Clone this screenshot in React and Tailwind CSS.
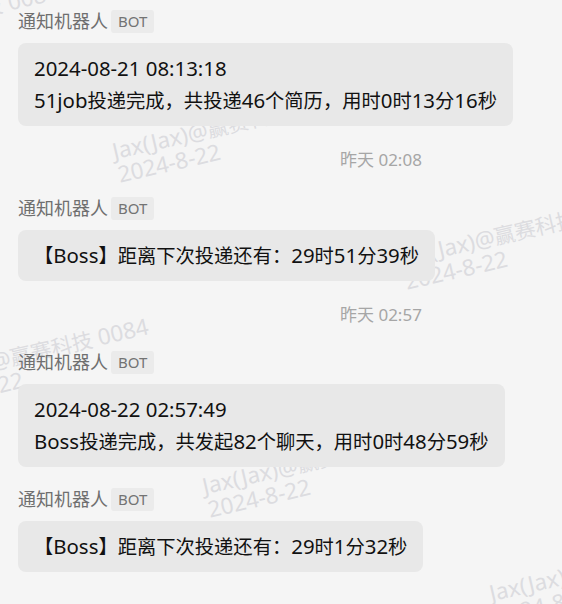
import React from "react";

const FONT = { fontFamily: "'Noto Sans', 'Open Sans', 'Noto Sans CJK SC', sans-serif" };

const marks = [
  [-177, 33],
  [110, 140],
  [397, 247],
  [-87, 368],
  [200, 475],
  [487, 582],
];

function Mixed({ text, latin }) {
  const parts = text.match(/[\x20-\x7e]+|[^\x20-\x7e]+/g) || [];
  return parts.map((p, i) =>
    /^[\x20-\x7e]+$/.test(p) ? (
      <span key={i} className={latin}>{p}</span>
    ) : (
      <span key={i}>{p}</span>
    )
  );
}

function Watermark({ x, y }) {
  return (
    <div
      className="absolute origin-top-left rotate-[-13deg] whitespace-nowrap text-[21px] leading-[24px] text-[#dcdce0]"
      style={{ left: x, top: y }}
    >
      <div><Mixed text="Jax(Jax)@赢赛科技 0084" latin="text-[22.5px] leading-[0]" /></div>
      <div><Mixed text="2024-8-22" latin="text-[22.5px] leading-[0]" /></div>
    </div>
  );
}

function Name() {
  return (
    <div className="flex h-[23px] items-center">
      <span className="text-[18px] leading-[23px] text-[#6f6f6f]">通知机器人</span>
      <span className="ml-[3px] flex h-[23px] items-center rounded-[3px] bg-[#ebebeb] px-[7px] text-[15px] text-[#737373]">
        BOT
      </span>
    </div>
  );
}

function Bubble({ lines }) {
  return (
    <div className="mt-[10px] flex">
      <div className="rounded-lg bg-[#e8e8e8] px-4 pt-[10px] pb-[9px] text-[19.3px] leading-[32px] text-[#111]">
        {lines.map((l, i) => (
          <div key={i} className="h-[32px] whitespace-nowrap">
            <Mixed text={l} latin="text-[20.4px] leading-[0]" />
          </div>
        ))}
      </div>
    </div>
  );
}

function Time({ t }) {
  return (
    <div className="mt-[22px] h-[24px] pl-[322px] text-[17px] leading-[24px] text-[#a6a6a6]">{t}</div>
  );
}

export default function App() {
  return (
    <div className="relative h-[604px] w-[562px] overflow-hidden bg-[#f5f5f5]" style={FONT}>
      <div className="absolute inset-0 z-0">
        {marks.map(([x, y], i) => (
          <Watermark key={i} x={x} y={y} />
        ))}
      </div>
      <div className="relative z-10 flex flex-col px-[18px] pt-[10px]">
        <Name />
        <Bubble lines={["2024-08-21 08:13:18", "51job投递完成，共投递46个简历，用时0时13分16秒"]} />
        <Time t="昨天 02:08" />
        <div className="mt-[25px]">
          <Name />
          <Bubble lines={["【Boss】距离下次投递还有：29时51分39秒"]} />
        </div>
        <Time t="昨天 02:57" />
        <div className="mt-[24px]">
          <Name />
          <Bubble lines={["2024-08-22 02:57:49", "Boss投递完成，共发起82个聊天，用时0时48分59秒"]} />
        </div>
        <div className="mt-[21px]">
          <Name />
          <Bubble lines={["【Boss】距离下次投递还有：29时1分32秒"]} />
        </div>
      </div>
    </div>
  );
}
